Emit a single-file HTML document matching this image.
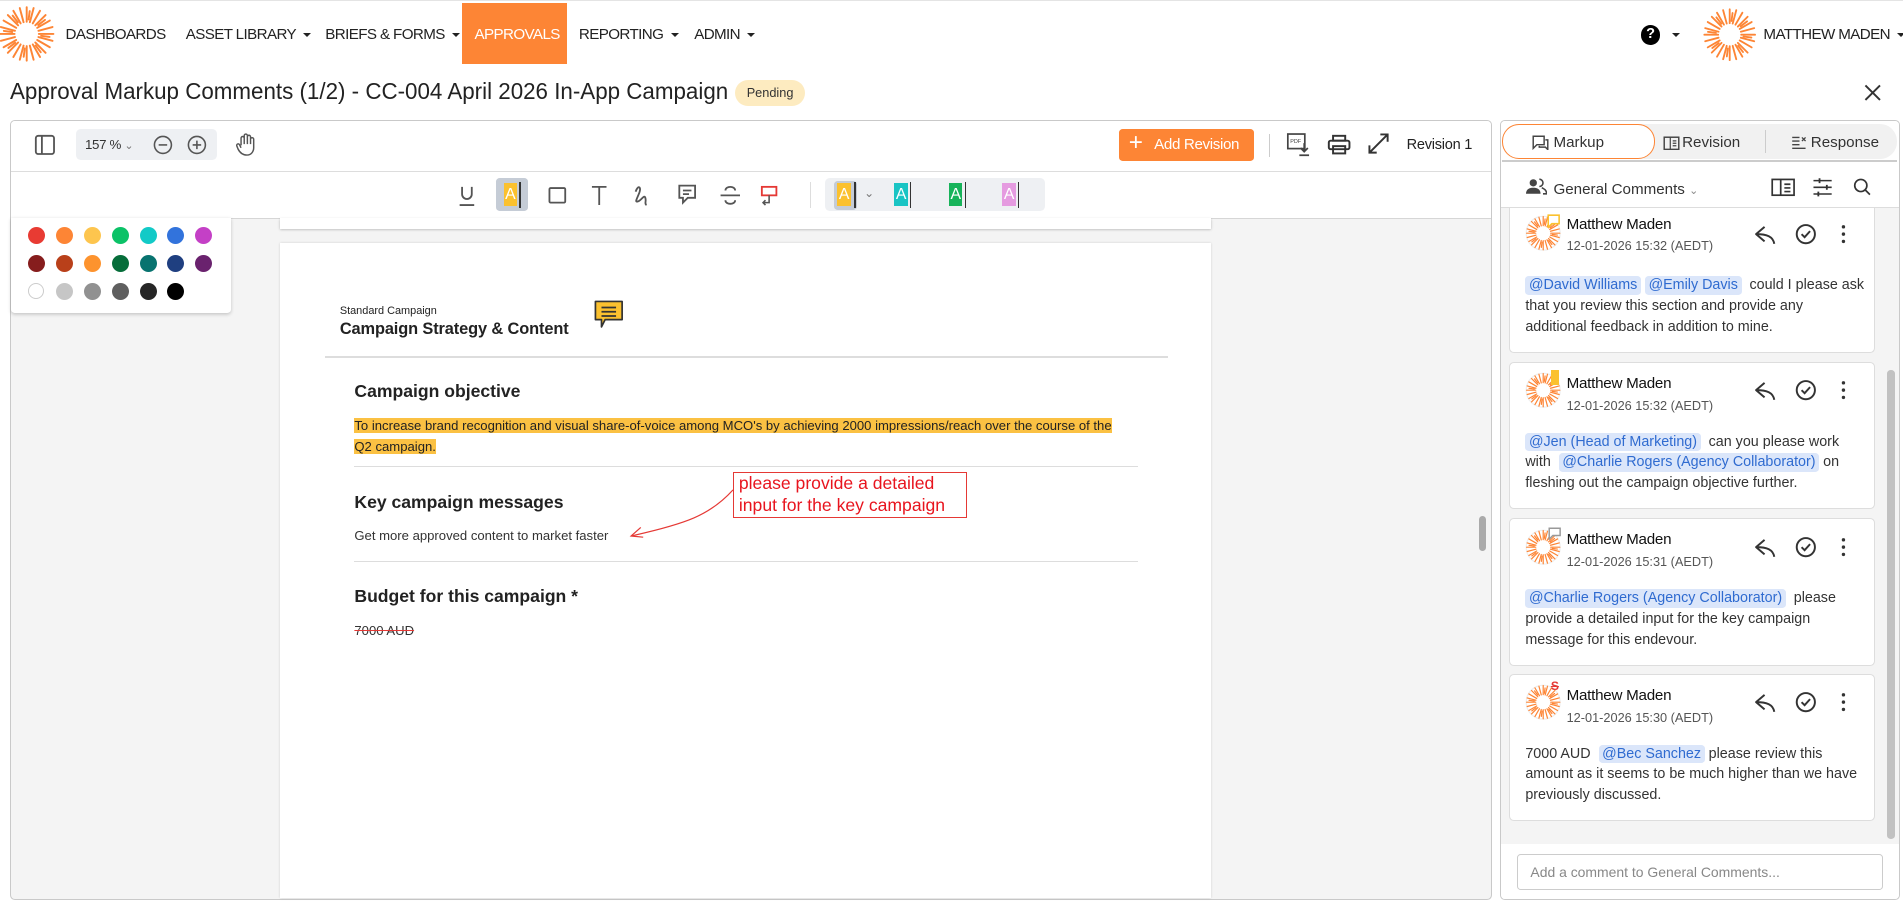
<!DOCTYPE html>
<html><head><meta charset="utf-8"><style>
html{zoom:1.21365}
body{margin:0;width:1568px;height:746px;overflow:hidden;background:#fff;font-family:"Liberation Sans",Arial,sans-serif;color:#222;position:relative}
.a{position:absolute}
.nav{top:0;left:0;width:1568px;height:52px;border-top:1px solid #e4e4e4}
.ni{position:absolute;top:21px;font-size:12.5px;color:#222;letter-spacing:-.5px;white-space:nowrap}
.car{display:inline-block;width:0;height:0;border-left:3.5px solid transparent;border-right:3.5px solid transparent;border-top:4px solid #222;vertical-align:2px;margin-left:6px}
.box{border:1px solid #c9c9c9;border-radius:4px}
.dot{position:absolute;width:14px;height:14px;border-radius:50%}
.card{position:absolute;left:1243px;width:300px;background:#fff;border:1px solid #ddd;border-radius:4px}
.nm{position:absolute;left:47px;top:10px;font-size:12.5px;color:#111;letter-spacing:-.2px}
.dt{position:absolute;left:47px;top:29px;font-size:10.5px;color:#555}
.tx{position:absolute;left:13px;font-size:11.8px;line-height:17px;color:#333;width:282px}
.m{background:#dbe6fa;color:#2f6bd0;border-radius:3px;padding:1px 3px}
.av{position:absolute;left:13px;top:8px}
.ic{position:absolute;top:10px}
.hd{position:absolute;font-weight:bold;font-size:14.5px;color:#222}
</style></head><body>
<svg width="0" height="0" style="position:absolute"><defs>
<g id="sun"><g stroke="#fd8535" stroke-width="1.6" stroke-linecap="round">
<line x1="0" y1="-10" x2="0" y2="-22"/><line x1="0" y1="-10" x2="0" y2="-22" transform="rotate(15)"/><line x1="0" y1="-10" x2="0" y2="-22" transform="rotate(30)"/><line x1="0" y1="-10" x2="0" y2="-22" transform="rotate(45)"/><line x1="0" y1="-10" x2="0" y2="-22" transform="rotate(60)"/><line x1="0" y1="-10" x2="0" y2="-22" transform="rotate(75)"/><line x1="0" y1="-10" x2="0" y2="-22" transform="rotate(90)"/><line x1="0" y1="-10" x2="0" y2="-22" transform="rotate(105)"/><line x1="0" y1="-10" x2="0" y2="-22" transform="rotate(120)"/><line x1="0" y1="-10" x2="0" y2="-22" transform="rotate(135)"/><line x1="0" y1="-10" x2="0" y2="-22" transform="rotate(150)"/><line x1="0" y1="-10" x2="0" y2="-22" transform="rotate(165)"/><line x1="0" y1="-10" x2="0" y2="-22" transform="rotate(180)"/><line x1="0" y1="-10" x2="0" y2="-22" transform="rotate(195)"/><line x1="0" y1="-10" x2="0" y2="-22" transform="rotate(210)"/><line x1="0" y1="-10" x2="0" y2="-22" transform="rotate(225)"/><line x1="0" y1="-10" x2="0" y2="-22" transform="rotate(240)"/><line x1="0" y1="-10" x2="0" y2="-22" transform="rotate(255)"/><line x1="0" y1="-10" x2="0" y2="-22" transform="rotate(270)"/><line x1="0" y1="-10" x2="0" y2="-22" transform="rotate(285)"/><line x1="0" y1="-10" x2="0" y2="-22" transform="rotate(300)"/><line x1="0" y1="-10" x2="0" y2="-22" transform="rotate(315)"/><line x1="0" y1="-10" x2="0" y2="-22" transform="rotate(330)"/><line x1="0" y1="-10" x2="0" y2="-22" transform="rotate(345)"/>
<line x1="0" y1="-12" x2="0" y2="-19" transform="rotate(7.5)"/><line x1="0" y1="-12" x2="0" y2="-19" transform="rotate(52.5)"/><line x1="0" y1="-12" x2="0" y2="-19" transform="rotate(97.5)"/><line x1="0" y1="-12" x2="0" y2="-19" transform="rotate(142.5)"/><line x1="0" y1="-12" x2="0" y2="-19" transform="rotate(187.5)"/><line x1="0" y1="-12" x2="0" y2="-19" transform="rotate(232.5)"/><line x1="0" y1="-12" x2="0" y2="-19" transform="rotate(277.5)"/><line x1="0" y1="-12" x2="0" y2="-19" transform="rotate(322.5)"/>
</g></g>
<g id="acts" fill="none" stroke="#333" stroke-width="1.6"><path d="M12 4 L5 10 L12 16 M5 10 C14 10 19 12 20 18" stroke-linejoin="round"/><circle cx="46" cy="10" r="7.5"/><path d="M42.5 10 l2.5 2.5 l4.5 -5"/><circle cx="77" cy="4" r="1.4" fill="#333" stroke="none"/><circle cx="77" cy="10" r="1.4" fill="#333" stroke="none"/><circle cx="77" cy="16" r="1.4" fill="#333" stroke="none"/></g>
</defs></svg>

<div class="a nav">
<svg class="a" style="left:0;top:4px" width="46" height="46"><use href="#sun" transform="translate(22 23)"/></svg>
<div class="ni" style="left:54px">DASHBOARDS</div>
<div class="ni" style="left:153px">ASSET LIBRARY<span class="car"></span></div>
<div class="ni" style="left:268px">BRIEFS &amp; FORMS<span class="car"></span></div>
<div class="a" style="left:381px;top:2px;width:86px;height:50px;background:#fd8535"></div>
<div class="ni" style="left:391px;color:#fff">APPROVALS</div>
<div class="ni" style="left:477px">REPORTING<span class="car"></span></div>
<div class="ni" style="left:572px">ADMIN<span class="car"></span></div>
<div class="a" style="left:1352px;top:20px;width:16px;height:16px;border-radius:50%;background:#000;color:#fff;font-size:12px;font-weight:bold;text-align:center;line-height:16px">?</div>
<span class="car a" style="left:1372px;top:26px"></span>
<svg class="a" style="left:1403px;top:6px" width="44" height="44"><use href="#sun" transform="translate(22 22) scale(.95)"/></svg>
<div class="ni" style="left:1453px">MATTHEW MADEN<span class="car"></span></div>
</div>

<div class="a" style="left:8px;top:64px;font-size:19px;color:#222;transform:scaleX(.97);transform-origin:0 0;white-space:nowrap">Approval Markup Comments (1/2) - CC-004 April 2026 In-App Campaign</div>
<div class="a" style="left:606px;top:66px;width:57px;height:21px;border-radius:11px;background:#fdebc0;font-size:10.5px;text-align:center;line-height:21px;color:#333">Pending</div>
<svg class="a" style="left:1535px;top:68px" width="16" height="16"><path d="M2 2L14 14M14 2L2 14" stroke="#333" stroke-width="1.6"/></svg>

<!-- left panel -->
<div class="a box" style="left:8px;top:99px;width:1220px;height:641px;background:#f4f4f4;overflow:hidden">
 <div class="a" style="left:0;top:0;width:1220px;height:80px;background:#fff;border-bottom:1px solid #d6d6d6"></div>
 <div class="a" style="left:0;top:41px;width:1220px;border-top:1px solid #ddd"></div>
</div>
<svg class="a" style="left:28px;top:110px" width="18" height="18"><rect x="1.5" y="1.5" width="15" height="15" rx="2" fill="none" stroke="#555" stroke-width="1.5"/><line x1="6.5" y1="1.5" x2="6.5" y2="16.5" stroke="#555" stroke-width="1.5"/></svg>
<div class="a" style="left:63px;top:106px;width:116px;height:26px;background:#eef0f3;border-radius:4px"></div>
<div class="a" style="left:70px;top:113px;font-size:11px;color:#333;letter-spacing:-.3px">157 % <span style="font-size:9px;color:#777">⌄</span></div>
<svg class="a" style="left:125px;top:110px" width="60" height="18"><g fill="none" stroke="#555" stroke-width="1.3"><circle cx="9" cy="9" r="7"/><path d="M5.5 9h7"/><circle cx="37" cy="9" r="7"/><path d="M33.5 9h7M37 5.5v7"/></g></svg>
<svg class="a" style="left:194px;top:109px" width="18" height="20"><path d="M5 11V5a1.3 1.3 0 0 1 2.6 0v5V3a1.3 1.3 0 0 1 2.6 0v7V4a1.3 1.3 0 0 1 2.6 0v6V6a1.3 1.3 0 0 1 2.6 0v7c0 3-2 6-5.5 6S4 17 2.5 14L1.5 11.5a1.2 1.2 0 0 1 2.2-1L5 13" fill="none" stroke="#555" stroke-width="1.2"/></svg>

<div class="a" style="left:922px;top:106px;width:111px;height:27px;background:#fd8535;border-radius:3px;color:#fff;font-size:12.5px;line-height:27px"><span style="font-size:20px;position:absolute;left:8px;top:-1px;font-weight:300">+</span><span style="position:absolute;left:29px;letter-spacing:-.3px">Add Revision</span></div>
<div class="a" style="left:1046px;top:110px;height:19px;border-left:1px solid #ccc"></div>
<svg class="a" style="left:1060px;top:108px" width="22" height="22"><rect x="1.5" y="2.5" width="14" height="12" fill="none" stroke="#444" stroke-width="1.4"/><text x="3.5" y="10" font-size="4.5" fill="#444" font-family="Liberation Sans">PDF</text><path d="M15 10v7M12 14l3 3 3-3M11 20h8" stroke="#444" stroke-width="1.4" fill="none"/></svg>
<svg class="a" style="left:1093px;top:110px" width="20" height="18"><g fill="none" stroke="#333" stroke-width="1.6"><rect x="5" y="1.5" width="10" height="4"/><rect x="1.5" y="5.5" width="17" height="7" rx="1.5"/><rect x="5" y="10" width="10" height="6"/></g></svg>
<svg class="a" style="left:1126px;top:109px" width="19" height="19"><path d="M2 17L17 2M11 2h6v6M2 11v6h6" fill="none" stroke="#333" stroke-width="1.6"/></svg>
<div class="a" style="left:1159px;top:113px;font-size:12px;color:#222;letter-spacing:-.2px">Revision 1</div>

<!-- annotation tools -->
<svg class="a" style="left:376px;top:150px" width="290" height="22">
<g fill="none" stroke="#555" stroke-width="1.5">
<path d="M5 4v6a4 4 0 0 0 8 0V4M3 19h12"/>
<rect x="77" y="5" width="13" height="12" rx="1"/>
<path d="M112 4h12M118 4v15"/>
<path d="M148 8c2-6 5-4 3 1s-4 8-1 7 5-6 6-3-1 5 1 6"/>
<path d="M184 3h13v10h-6l-4 4v-4h-3zM187 7h7M187 10h5"/>
<path d="M218 11h16M222 7c0-4 8-4 8 0M222 15c0 4 8 4 8 0"/>
</g>
<rect x="252" y="4" width="12" height="7" fill="none" stroke="#e53935" stroke-width="1.5"/><path d="M258 11v6h-5M255 15l-2 2 2 2" fill="none" stroke="#555" stroke-width="1.3"/>
</svg>
<div class="a" style="left:409px;top:147px;width:26px;height:27px;background:#c5ccd6;border-radius:3px"></div>
<div class="a" style="left:415px;top:151px;width:11px;height:19px;background:#fbc12f;color:#fff;font-size:13px;text-align:center;line-height:19px">A</div>
<div class="a" style="left:428px;top:150px;height:21px;border-left:2px solid #333"></div>
<div class="a" style="left:667px;top:150px;height:21px;border-left:1px solid #ddd"></div>
<div class="a" style="left:680px;top:147px;width:181px;height:27px;background:#eef0f3;border-radius:4px"></div>
<div class="a" style="left:687px;top:149px;width:19px;height:24px;background:#c5ccd6;border-radius:3px"></div>
<div class="a" style="left:690px;top:151px;width:11px;height:19px;background:#fbc12f;color:#fff;font-size:13px;text-align:center;line-height:19px">A</div>
<div class="a" style="left:704px;top:150px;height:21px;border-left:2px solid #333"></div>
<div class="a" style="left:712px;top:153px;font-size:10px;color:#777">⌄</div>
<div class="a" style="left:737px;top:151px;width:11px;height:19px;background:#19c4c4;color:#fff;font-size:13px;text-align:center;line-height:19px">A</div><div class="a" style="left:750px;top:150px;height:21px;border-left:1px solid #333"></div>
<div class="a" style="left:782px;top:151px;width:11px;height:19px;background:#17b35a;color:#fff;font-size:13px;text-align:center;line-height:19px">A</div><div class="a" style="left:795px;top:150px;height:21px;border-left:1px solid #333"></div>
<div class="a" style="left:826px;top:151px;width:11px;height:19px;background:#e59be0;color:#fff;font-size:13px;text-align:center;line-height:19px">A</div><div class="a" style="left:839px;top:150px;height:21px;border-left:1px solid #333"></div>

<!-- palette -->
<div class="a" style="left:9px;top:180px;width:181px;height:78px;background:#fff;box-shadow:0 1px 3px rgba(0,0,0,.2);border-radius:0 0 3px 3px"></div>
<div class="dot" style="left:23px;top:187px;background:#e83b33"></div><div class="dot" style="left:46px;top:187px;background:#fd8535"></div><div class="dot" style="left:69px;top:187px;background:#fdc54e"></div><div class="dot" style="left:92px;top:187px;background:#0bc267"></div><div class="dot" style="left:115px;top:187px;background:#12cac7"></div><div class="dot" style="left:138px;top:187px;background:#3273dc"></div><div class="dot" style="left:161px;top:187px;background:#c440c6"></div>
<div class="dot" style="left:23px;top:210px;background:#861d1d"></div><div class="dot" style="left:46px;top:210px;background:#b9401a"></div><div class="dot" style="left:69px;top:210px;background:#fd932e"></div><div class="dot" style="left:92px;top:210px;background:#066d3a"></div><div class="dot" style="left:115px;top:210px;background:#08736f"></div><div class="dot" style="left:138px;top:210px;background:#1f3f80"></div><div class="dot" style="left:161px;top:210px;background:#6a226e"></div>
<div class="dot" style="left:23px;top:233px;background:#fff;border:1px solid #ccc;width:12px;height:12px"></div><div class="dot" style="left:46px;top:233px;background:#c6c6c6"></div><div class="dot" style="left:69px;top:233px;background:#919191"></div><div class="dot" style="left:92px;top:233px;background:#5f5f5f"></div><div class="dot" style="left:115px;top:233px;background:#262626"></div><div class="dot" style="left:138px;top:233px;background:#000"></div>

<!-- pages -->
<div class="a" style="left:231px;top:180px;width:767px;height:9px;background:#fff;box-shadow:0 1px 2px rgba(0,0,0,.25)"></div>
<div class="a" style="left:231px;top:200px;width:767px;height:540px;background:#fff;box-shadow:0 0 2px rgba(0,0,0,.15)"></div>
<div class="a" style="left:1219px;top:425px;width:5px;height:29px;background:#aaa;border-radius:3px"></div>
<div class="a" style="left:280px;top:251px;font-size:9px;color:#222">Standard Campaign</div>
<div class="a" style="left:280px;top:264px;font-size:13.5px;font-weight:bold;color:#222;letter-spacing:-.1px">Campaign Strategy &amp; Content</div>
<svg class="a" style="left:489px;top:246px" width="26" height="28"><path d="M2 2h22v15H10l-3 6v-6H2z" fill="#fbc12f" stroke="#333" stroke-width="1.4" stroke-linejoin="round"/><path d="M7 7h12M7 10.5h12M7 14h12" stroke="#333" stroke-width="1.4"/></svg>
<div class="a" style="left:268px;top:293px;width:694px;border-top:2px solid #ddd"></div>
<div class="hd" style="left:292px;top:314px">Campaign objective</div>
<div class="a" style="left:292px;top:343px;width:640px;font-size:10.8px;line-height:17px;color:#222"><span style="background:#fbc143">To increase brand recognition and visual share-of-voice among MCO's by achieving 2000 impressions/reach over the course of the Q2 campaign.</span></div>
<div class="a" style="left:292px;top:384px;width:646px;border-top:1px solid #ddd"></div>
<div class="hd" style="left:292px;top:405px">Key campaign messages</div>
<div class="a" style="left:292px;top:435px;font-size:10.8px;color:#333">Get more approved content to market faster</div>
<div class="a" style="left:604px;top:389px;height:38px;border:1px solid #e53935;color:#e8141e;font-size:14.5px;line-height:18px;padding-left:4px;box-sizing:border-box;width:193px">please provide a detailed<br>input for the key campaign</div>
<svg class="a" style="left:515px;top:400px" width="95" height="45"><path d="M89 4 C70 25 50 32 5 42 M13 35 L5 42 L15 43" fill="none" stroke="#e53935" stroke-width="1"/></svg>
<div class="a" style="left:292px;top:462px;width:646px;border-top:1px solid #ddd"></div>
<div class="hd" style="left:292px;top:483px">Budget for this campaign *</div>
<div class="a" style="left:292px;top:513px;font-size:10.8px;color:#333;text-decoration:line-through;text-decoration-color:#e53935">7000 AUD</div>

<!-- right panel -->
<div class="a box" style="left:1236px;top:99px;width:328px;height:641px;background:#f4f4f4;overflow:hidden">
 <div class="a" style="left:0;top:0;width:328px;height:71px;background:#fff;border-bottom:1px solid #ddd"></div>
 <div class="a" style="left:0;top:596px;width:328px;height:50px;background:#fff"></div>
</div>
<div class="a" style="left:1238px;top:102px;width:325px;height:29px;background:#f1f1f1;border-radius:14px"></div>
<div class="a" style="left:1238px;top:102px;width:124px;height:27px;border:1px solid #fd8535;border-radius:14px;background:#fff"></div>
<div class="a" style="left:1238px;top:132px;width:325px;border-top:2px solid #ccc"></div>
<div class="a" style="left:1454px;top:107px;height:19px;border-left:1px solid #ccc"></div>
<div class="a" style="left:1280px;top:110px;font-size:12.5px;color:#333">Markup</div>
<svg class="a" style="left:1262px;top:111px" width="14" height="13"><path d="M1 1h9v7H4l-3 3zM11 4h2v8l-2-2H6V9" fill="none" stroke="#444" stroke-width="1.2"/></svg>
<div class="a" style="left:1386px;top:110px;font-size:12.5px;color:#333">Revision</div>
<svg class="a" style="left:1370px;top:112px" width="14" height="12"><rect x="1" y="1" width="12" height="10" fill="none" stroke="#444" stroke-width="1.2"/><path d="M6 1v10M8 4h3M8 6h3M8 8h3" stroke="#444" stroke-width="1"/></svg>
<div class="a" style="left:1492px;top:110px;font-size:12.5px;color:#333">Response</div>
<svg class="a" style="left:1476px;top:111px" width="13" height="13"><path d="M1 2h6M1 5h6M1 8h6M1 11h11M9 2l3 3M12 2l-3 3" stroke="#444" stroke-width="1.1"/></svg>

<svg class="a" style="left:1257px;top:147px" width="18" height="14"><g fill="#444"><circle cx="6" cy="4" r="3"/><path d="M0 13c0-4 3-5 6-5s6 1 6 5z"/><path d="M11 1a3 3 0 0 1 0 6M13 8c2 1 4 2 4 5h-3" fill="none" stroke="#444" stroke-width="1.3"/></g></svg>
<div class="a" style="left:1280px;top:149px;font-size:12.5px;color:#333">General Comments <span style="font-size:9px;color:#888">⌄</span></div>
<svg class="a" style="left:1459px;top:146px" width="90" height="18"><g fill="none" stroke="#333" stroke-width="1.4"><rect x="1" y="2" width="18" height="13"/><path d="M8 2v13M11 6h5M11 9h5M11 12h5"/><path d="M35 3h15M35 8.5h15M35 14h15" stroke-width="1.3"/><path d="M40 1v4M46 6.5v4M39 12v4" stroke-width="1.5"/><circle cx="74" cy="7" r="5"/><path d="M77.5 10.5l4 4"/></g></svg>

<div class="a" style="left:1555px;top:305px;width:6px;height:386px;background:#c1c1c1;border-radius:3px"></div>

<div class="card" style="top:171px;height:119px;border-top:none;border-radius:0 0 4px 4px">
 <svg class="av" style="top:6px" width="30" height="30"><circle cx="15" cy="15" r="14" fill="#fff" stroke="#eee"/><use href="#sun" transform="translate(15 15) scale(.62)"/></svg>
 <svg class="a" style="left:31px;top:5px" width="12" height="12"><path d="M1 1h9v7H4l-3 3z" fill="#fff" stroke="#fbc12f" stroke-width="1.3"/></svg>
 <div class="nm" style="top:7px">Matthew Maden</div><div class="dt" style="top:25px">12-01-2026 15:32 (AEDT)</div>
 <svg class="ic" style="left:198px;top:12px" width="82" height="20"><use href="#acts"/></svg>
 <div class="tx" style="top:56px"><span class="m">@David Williams</span> <span class="m">@Emily Davis</span>&nbsp; could I please ask that you review this section and provide any additional feedback in addition to mine.</div>
</div>
<div class="card" style="top:298px;height:120px">
 <svg class="av" width="30" height="30"><circle cx="15" cy="15" r="14" fill="#fff" stroke="#eee"/><use href="#sun" transform="translate(15 15) scale(.62)"/></svg>
 <div class="a" style="left:34px;top:6px;width:7px;height:12px;background:#fbc12f"></div>
 <div class="nm">Matthew Maden</div><div class="dt">12-01-2026 15:32 (AEDT)</div>
 <svg class="ic" style="left:198px;top:13px" width="82" height="20"><use href="#acts"/></svg>
 <div class="tx" style="top:57px;width:276px"><span class="m">@Jen (Head of Marketing)</span>&nbsp; can you please work with &nbsp;<span class="m">@Charlie Rogers (Agency Collaborator)</span> on fleshing out the campaign objective further.</div>
</div>
<div class="card" style="top:427px;height:120px">
 <svg class="av" width="30" height="30"><circle cx="15" cy="15" r="14" fill="#fff" stroke="#eee"/><use href="#sun" transform="translate(15 15) scale(.62)"/></svg>
 <svg class="a" style="left:32px;top:6px" width="12" height="11"><path d="M1 1h9v6H4l-3 3z" fill="#fff" stroke="#999" stroke-width="1.2"/></svg>
 <div class="nm">Matthew Maden</div><div class="dt">12-01-2026 15:31 (AEDT)</div>
 <svg class="ic" style="left:198px;top:13px" width="82" height="20"><use href="#acts"/></svg>
 <div class="tx" style="top:57px;width:276px"><span class="m">@Charlie Rogers (Agency Collaborator)</span>&nbsp; please provide a detailed input for the key campaign message for this endevour.</div>
</div>
<div class="card" style="top:555px;height:120px">
 <svg class="av" width="30" height="30"><circle cx="15" cy="15" r="14" fill="#fff" stroke="#eee"/><use href="#sun" transform="translate(15 15) scale(.62)"/></svg>
 <div class="a" style="left:34px;top:4px;font-size:10px;color:#e53935;font-weight:bold;text-decoration:line-through">S</div>
 <div class="nm">Matthew Maden</div><div class="dt">12-01-2026 15:30 (AEDT)</div>
 <svg class="ic" style="left:198px;top:13px" width="82" height="20"><use href="#acts"/></svg>
 <div class="tx" style="top:57px;width:276px">7000 AUD &nbsp;<span class="m">@Bec Sanchez</span> please review this amount as it seems to be much higher than we have previously discussed.</div>
</div>
<div class="a" style="left:1250px;top:704px;width:300px;height:28px;border:1px solid #ccc;border-radius:3px;background:#fff"></div>
<div class="a" style="left:1261px;top:712px;font-size:11.5px;color:#888">Add a comment to General Comments...</div>
</body></html>
